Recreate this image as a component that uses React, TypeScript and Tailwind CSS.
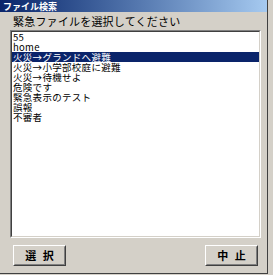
import React from "react";

const items = [
  "55",
  "home",
  "火災→グランドへ避難",
  "火災→小学部校庭に避難",
  "火災→待機せよ",
  "危険です",
  "緊急表示のテスト",
  "誤報",
  "不審者",
];

function Btn({ label }: { label: string }) {
  return (
    <div className="w-[53px] h-[21px] border border-t-white border-l-white border-r-[#404040] border-b-[#404040]">
      <div className="w-full h-full border border-t-[#d4d0c8] border-l-[#d4d0c8] border-r-[#808080] border-b-[#808080] flex items-center justify-center text-[11px] font-bold text-black leading-none tracking-[2px] pl-[2px]">
        {label}
      </div>
    </div>
  );
}

export default function App() {
  return (
    <div
      className="w-[273px] h-[275px] bg-[#d4d0c8] overflow-hidden"
      style={{ fontFamily: '"Noto Sans CJK JP", "Noto Sans", sans-serif' }}
    >
      <div className="w-[268px] h-[274px] flex flex-col border-r border-b border-r-[#404040] border-b-[#404040]">
        <div className="h-[12px] bg-gradient-to-r from-[#0a246a] to-[#a6caf0] flex items-center pl-[3px]">
          <span className="text-white font-bold text-[9px] leading-none">ファイル検索</span>
        </div>
        <div className="h-[18px] pl-[13px] flex items-center text-[11px] leading-none text-black tracking-[0.2px]">
          緊急ファイルを選択してください
        </div>
        <div className="ml-[10px] w-[251px] h-[208px] border border-t-[#808080] border-l-[#808080] border-r-white border-b-white">
          <div className="w-full h-full border border-t-[#404040] border-l-[#404040] border-r-[#d4d0c8] border-b-[#d4d0c8] bg-white flex flex-col">
            {items.map((t, i) => (
              <div
                key={i}
                className={
                  "h-[10px] pl-[1px] text-[9.5px] leading-[10px] whitespace-nowrap tracking-[0.3px] " +
                  (i === 2 ? "bg-[#0a246a] text-white" : "text-black")
                }
              >
                {t}
              </div>
            ))}
          </div>
        </div>
        <div className="mt-[7px] pl-[13px] pr-[9px] flex justify-between">
          <Btn label="選 択" />
          <Btn label="中 止" />
        </div>
      </div>
    </div>
  );
}
